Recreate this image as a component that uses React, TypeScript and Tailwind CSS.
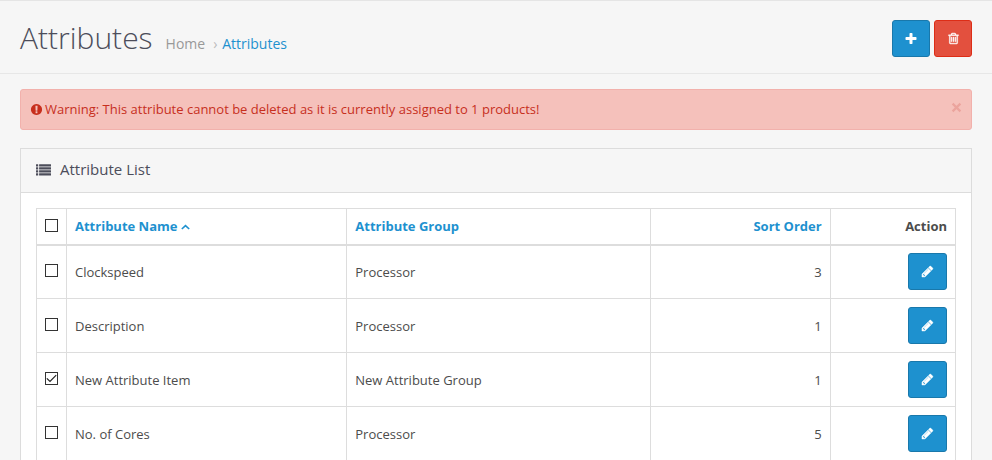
import { useState } from "react";
import type { ReactNode } from "react";

const PLUS =
  "M1600 736v192q0 40-28 68t-68 28h-416v416q0 40-28 68t-68 28h-192q-40 0-68-28t-28-68v-416h-416q-40 0-68-28t-28-68v-192q0-40 28-68t68-28h416v-416q0-40 28-68t68-28h192q40 0 68 28t28 68v416h416q40 0 68 28t28 68z";
const TRASH =
  "M704 736v576q0 14-9 23t-23 9h-64q-14 0-23-9t-9-23v-576q0-14 9-23t23-9h64q14 0 23 9t9 23zm256 0v576q0 14-9 23t-23 9h-64q-14 0-23-9t-9-23v-576q0-14 9-23t23-9h64q14 0 23 9t9 23zm256 0v576q0 14-9 23t-23 9h-64q-14 0-23-9t-9-23v-576q0-14 9-23t23-9h64q14 0 23 9t9 23zm128 724v-948h-896v948q0 22 7 40.5t14.5 27 10.5 8.5h832q3 0 10.5-8.5t14.5-27 7-40.5zm-672-1076h448l-48-117q-7-9-17-11h-317q-10 2-17 11zm928 32v64q0 14-9 23t-23 9h-96v948q0 83-47 143.5t-113 60.5h-832q-66 0-113-58.5t-47-141.5v-952h-96q-14 0-23-9t-9-23v-64q0-14 9-23t23-9h309l70-167q15-37 54-63t79-26h320q40 0 79 26t54 63l70 167h309q14 0 23 9t9 23z";
const PENCIL =
  "M491 1536l91-91-235-235-91 91v107h128v128h107zm523-928q0-22-22-22-10 0-17 7l-542 542q-7 7-7 17 0 22 22 22 10 0 17-7l542-542q7-7 7-17zm-54-192l416 416-832 832h-416v-416zm683 96q0 53-37 90l-166 166-416-416 166-165q36-38 90-38 53 0 91 38l235 234q37 39 37 91z";
const WARNING =
  "M896 128q209 0 385.5 103t279.5 279.5 103 385.5-103 385.5-279.5 279.5-385.5 103-385.5-103-279.5-279.5-103-385.5 103-385.5 279.5-279.5 385.5-103zm128 1247v-190q0-14-9-23.5t-22-9.5h-192q-13 0-23 10t-10 23v190q0 13 10 23t23 10h192q13 0 22-9.5t9-23.5zm-2-344l18-621q0-12-10-18-10-8-24-8h-220q-14 0-24 8-10 6-10 18l17 621q0 10 10 17.5t24 7.5h185q14 0 23.5-7.5t10.5-17.5z";

function Glyph({ d, weight = 0, className }: { d: string; weight?: number; className: string }) {
  return (
    <svg
      viewBox="0 0 1792 1792"
      fill="currentColor"
      stroke="currentColor"
      strokeWidth={weight}
      aria-hidden="true"
      className={className}
    >
      <path d={d} />
    </svg>
  );
}

function ListGlyph() {
  return (
    <svg viewBox="0 0 15 12" fill="currentColor" aria-hidden="true" className="h-3 w-[15px]">
      {[0, 3, 6, 9].map((y) => (
        <g key={y}>
          <rect x="0" y={y + 0.3} width="2.2" height="2.3" rx="0.3" />
          <rect x="3.1" y={y + 0.3} width="11.9" height="2.3" rx="0.3" />
        </g>
      ))}
    </svg>
  );
}

function IconButton({
  label,
  tone,
  width,
  children,
}: {
  label: string;
  tone: "blue" | "red";
  width: string;
  children: ReactNode;
}) {
  const colours = tone === "blue" ? "border-[#1978ab] bg-[#1e91cf]" : "border-[#dd2d16] bg-[#e3503e]";
  return (
    <button
      type="button"
      aria-label={label}
      className={`inline-flex h-[37px] items-center justify-center rounded-[3px] border text-white ${width} ${colours}`}
    >
      {children}
    </button>
  );
}

function Tick({ label, checked, onChange }: { label: string; checked: boolean; onChange: () => void }) {
  return (
    <span className="relative block size-[13px]">
      <input
        type="checkbox"
        aria-label={label}
        checked={checked}
        onChange={onChange}
        className="block size-[13px] appearance-none border border-[#333333] bg-white"
      />
      {checked && (
        <svg
          viewBox="0 0 13 13"
          fill="none"
          stroke="#222222"
          strokeWidth="1.2"
          aria-hidden="true"
          className="pointer-events-none absolute inset-0 size-[13px]"
        >
          <path d="M1.8 6.4 5 9.4 11.2 3.2" />
        </svg>
      )}
    </span>
  );
}

const ROWS = [
  { name: "Clockspeed", group: "Processor", order: 3 },
  { name: "Description", group: "Processor", order: 1 },
  { name: "New Attribute Item", group: "New Attribute Group", order: 1 },
  { name: "No. of Cores", group: "Processor", order: 5 },
];

export default function App() {
  const [selected, setSelected] = useState<string[]>(["New Attribute Item"]);
  const all = selected.length === ROWS.length;
  const toggle = (name: string) =>
    setSelected((s) => (s.includes(name) ? s.filter((n) => n !== name) : [...s, name]));

  return (
    <div className="min-h-screen border-t border-[#e5e5e5] bg-[#f6f6f6] font-['Open_Sans',sans-serif] text-[13px] leading-5 text-[#4c4d5a]">
      <header className="flex items-start justify-between border-b border-[#e7e7e7] px-5 pt-[19px] pb-4">
        <div className="flex items-baseline gap-[13px]">
          <h1 className="text-[30px] leading-[35px] font-light">Attributes</h1>
          <nav aria-label="Breadcrumb" className="flex items-baseline text-sm">
            <a href="#home" className="text-[#999999]">Home</a>
            <span className="w-[17px] pl-2 text-[#bbbbbb]">›</span>
            <a href="#attributes" className="text-[#1e91cf]">Attributes</a>
          </nav>
        </div>
        <div className="flex gap-1">
          <IconButton label="Add New" tone="blue" width="w-[38px]">
            <Glyph d={PLUS} className="size-[14px]" />
          </IconButton>
          <IconButton label="Delete" tone="red" width="w-[38px]">
            <Glyph d={TRASH} weight={50} className="size-[13px]" />
          </IconButton>
        </div>
      </header>

      <main className="px-5 pt-[15px]">
        <div
          role="alert"
          className="mb-[18px] flex items-center rounded-[3px] border border-[#f2b1ac] bg-[#f5c1bb] px-[9px] pt-[9px] pb-[10px] text-[#c72f1d]"
        >
          <Glyph d={WARNING} className="mr-[2px] size-[13px]" />
          <p className="flex-1">Warning: This attribute cannot be deleted as it is currently assigned to 1 products!</p>
          <button type="button" aria-label="Close" className="pb-1 text-[#eba49d]">
            <svg viewBox="0 0 11 11" stroke="currentColor" strokeWidth="2.2" aria-hidden="true" className="size-[11px]">
              <path d="M1.6 1.6 9.4 9.4M9.4 1.6 1.6 9.4" />
            </svg>
          </button>
        </div>

        <section className="border border-[#dcdcdc] bg-white">
          <div className="flex items-center gap-[9px] border-b border-[#dcdcdc] bg-[#f6f6f6] px-[15px] pt-[10px] pb-3">
            <ListGlyph />
            <h2 className="text-[15px] leading-[21px]">Attribute List</h2>
          </div>
          <div className="p-[15px]">
            <table className="w-full table-fixed border-collapse text-[#4c4c4c] [&_td]:border [&_td]:border-[#dddddd] [&_td]:px-2 [&_th]:border [&_th]:border-b-2 [&_th]:border-[#dddddd] [&_th]:px-2">
              <colgroup>
                <col className="w-[30px]" />
                <col className="w-[30.5%]" />
                <col className="w-[33%]" />
                <col className="w-[19.6%]" />
                <col />
              </colgroup>
              <thead>
                <tr className="h-[36px] text-left">
                  <th scope="col" className="pb-[2px]">
                    <Tick label="Select all" checked={all} onChange={() => setSelected(all ? [] : ROWS.map((r) => r.name))} />
                  </th>
                  <th scope="col">
                    <a href="#name" className="inline-flex items-center gap-1 text-[#1e91cf]">
                      Attribute Name
                      <svg
                        viewBox="0 0 9 6"
                        fill="none"
                        stroke="currentColor"
                        strokeWidth="1.6"
                        aria-hidden="true"
                        className="mt-[2px] h-[6px] w-[9px]"
                      >
                        <path d="M0.8 5 4.5 1.6 8.2 5" />
                      </svg>
                    </a>
                  </th>
                  <th scope="col">
                    <a href="#group" className="text-[#1e91cf]">Attribute Group</a>
                  </th>
                  <th scope="col" className="text-right">
                    <a href="#order" className="text-[#1e91cf]">Sort Order</a>
                  </th>
                  <th scope="col" className="text-right">Action</th>
                </tr>
              </thead>
              <tbody>
                {ROWS.map((row) => (
                  <tr key={row.name} className="h-[54px]">
                    <td className="pb-[3px]">
                      <Tick label={row.name} checked={selected.includes(row.name)} onChange={() => toggle(row.name)} />
                    </td>
                    <td>{row.name}</td>
                    <td>{row.group}</td>
                    <td className="text-right">{row.order}</td>
                    <td>
                      <div className="flex justify-end">
                        <IconButton label={`Edit ${row.name}`} tone="blue" width="w-[39px]">
                          <Glyph d={PENCIL} weight={50} className="size-[13px]" />
                        </IconButton>
                      </div>
                    </td>
                  </tr>
                ))}
              </tbody>
            </table>
          </div>
        </section>
      </main>
    </div>
  );
}
